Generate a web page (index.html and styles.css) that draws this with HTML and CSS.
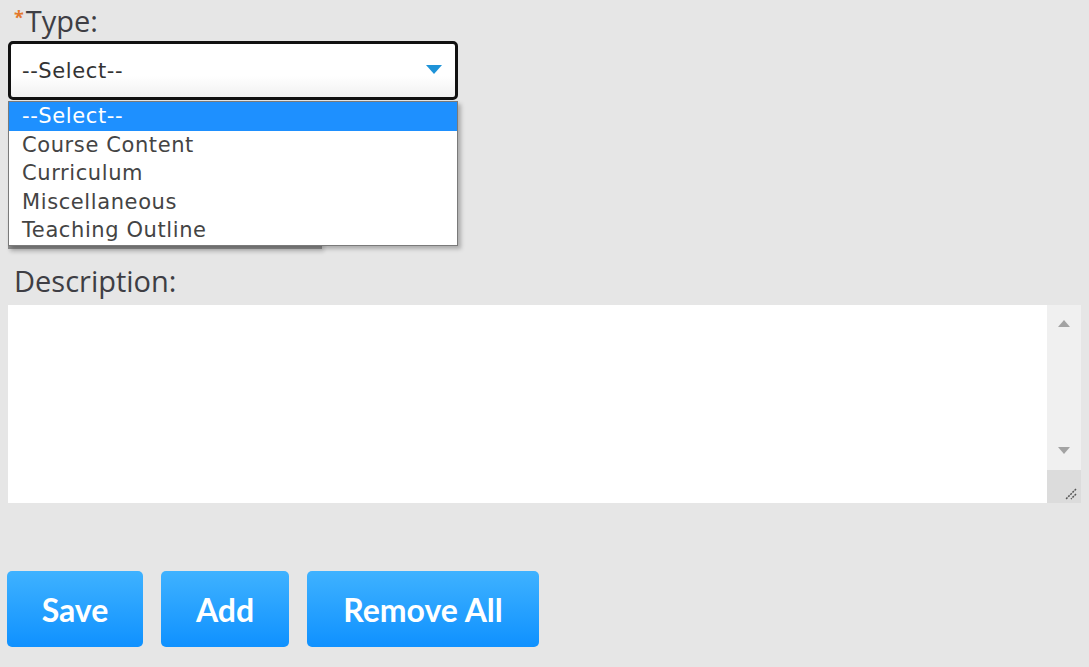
FILE: index.html
```html
<!DOCTYPE html>
<html lang="en">
<head>
    <meta charset="UTF-8">
    <meta name="viewport" content="width=device-width, initial-scale=1.0">
    <title>Document Type</title>
    <link rel="stylesheet" href="styles.css">
</head>
<body>
    <div class="form">
        <div class="field field-type">
            <label class="label"><span class="required">*</span>Type:</label>
            <div class="select-wrap">
                <div class="select">
                    <span>--Select--</span>
                    <svg class="select-arrow" width="16" height="9" viewBox="0 0 16 9"><path d="M0 0 H16 L8 9 Z" fill="#1e93d8"/></svg>
                </div>
                <ul class="options">
                    <li class="option selected">--Select--</li>
                    <li class="option">Course Content</li>
                    <li class="option">Curriculum</li>
                    <li class="option">Miscellaneous</li>
                    <li class="option">Teaching Outline</li>
                </ul>
            </div>
        </div>

        <div class="field field-hidden">
            <div class="input"></div>
        </div>

        <div class="field field-description">
            <label class="label">Description:</label>
            <div class="textarea">
                <div class="textarea-body"></div>
                <div class="scrollbar">
                    <svg class="scroll-up" width="12" height="7" viewBox="0 0 12 7"><path d="M6 0 L12 7 H0 Z" fill="#a3a3a3"/></svg>
                    <svg class="scroll-down" width="12" height="7" viewBox="0 0 12 7"><path d="M0 0 H12 L6 7 Z" fill="#a3a3a3"/></svg>
                    <div class="grip">
                        <svg width="14" height="14" viewBox="0 0 14 14"><path d="M13 3 L3 13 M13 8 L8 13" stroke="#555" stroke-width="1.5" stroke-dasharray="2 1"/></svg>
                    </div>
                </div>
            </div>
        </div>

        <div class="actions">
            <button class="btn btn-save">Save</button>
            <button class="btn btn-add">Add</button>
            <button class="btn btn-remove">Remove All</button>
        </div>
    </div>
</body>
</html>
```

FILE: styles.css
```css
* {
    margin: 0;
    padding: 0;
    box-sizing: border-box;
}

body {
    background-color: #e6e6e6;
    font-family: 'Open Sans', 'Liberation Sans', sans-serif;
    color: #3b3b3b;
}

.form {
    padding: 4px 8px 0 8px;
}

.label {
    display: block;
    font-size: 29px;
    line-height: 34px;
    padding-left: 6px;
    color: #3e3e44;
}

.required {
    color: #e4782c;
    font-size: 18px;
    font-weight: 700;
    vertical-align: top;
    line-height: 26px;
    margin-right: 2px;
}

.select-wrap {
    position: relative;
    width: 450px;
    margin-top: 3px;
}

.select {
    height: 59px;
    border: 3px solid #111;
    border-radius: 5px;
    background: linear-gradient(to bottom, #ffffff 60%, #f1f1f1);
    display: flex;
    align-items: center;
    justify-content: space-between;
    padding: 0 13px 0 11px;
    font-family: 'DejaVu Sans', Verdana, sans-serif;
    font-size: 21px;
    letter-spacing: 0.6px;
    color: #333;
}

.select-arrow {
    margin-top: -3px;
}

.options {
    list-style: none;
    position: absolute;
    top: 60px;
    left: 0;
    width: 450px;
    background: #fff;
    border: 1px solid #7a7a7a;
    box-shadow: 3px 3px 4px rgba(0, 0, 0, 0.25);
    z-index: 2;
}

.option {
    font-family: 'DejaVu Sans', Verdana, sans-serif;
    font-size: 21px;
    letter-spacing: 0.6px;
    line-height: 28.6px;
    height: 28.6px;
    padding-left: 13px;
    color: #444;
}

.option.selected {
    background-color: #1e90ff;
    color: #fff;
}

.field-hidden {
    margin-top: 109px;
}

.input {
    width: 314px;
    height: 40px;
    background: #fff;
    border-bottom: 3px solid #8d8d8d;
    box-shadow: 2px 3px 4px rgba(0, 0, 0, 0.15);
}

.field-description {
    margin-top: 15px;
}

.textarea {
    display: flex;
    width: 1073px;
    height: 198px;
    margin-top: 7px;
    background: #fff;
}

.textarea-body {
    flex: 1;
}

.scrollbar {
    width: 34px;
    background: #f0f0f0;
    display: flex;
    flex-direction: column;
    align-items: center;
}

.scroll-up {
    margin-top: 15px;
}

.scroll-down {
    margin-top: 120px;
}

.grip {
    margin-top: auto;
    width: 34px;
    height: 33px;
    background: #dcdcdc;
    display: flex;
    justify-content: flex-end;
    align-items: flex-end;
    padding: 0 4px 3px 0;
}

.actions {
    display: flex;
    gap: 18px;
    margin-top: 68px;
    margin-left: -1px;
}

.btn {
    height: 76px;
    border: none;
    border-radius: 5px;
    background: linear-gradient(to bottom, #3fb2ff, #0f91ff);
    color: #fff;
    font-family: 'Lato', 'Liberation Sans', sans-serif;
    font-weight: 700;
    font-size: 32px;
    text-align: center;
    cursor: pointer;
}

.btn-save {
    width: 136px;
}

.btn-add {
    width: 128px;
}

.btn-remove {
    width: 232px;
}
```
